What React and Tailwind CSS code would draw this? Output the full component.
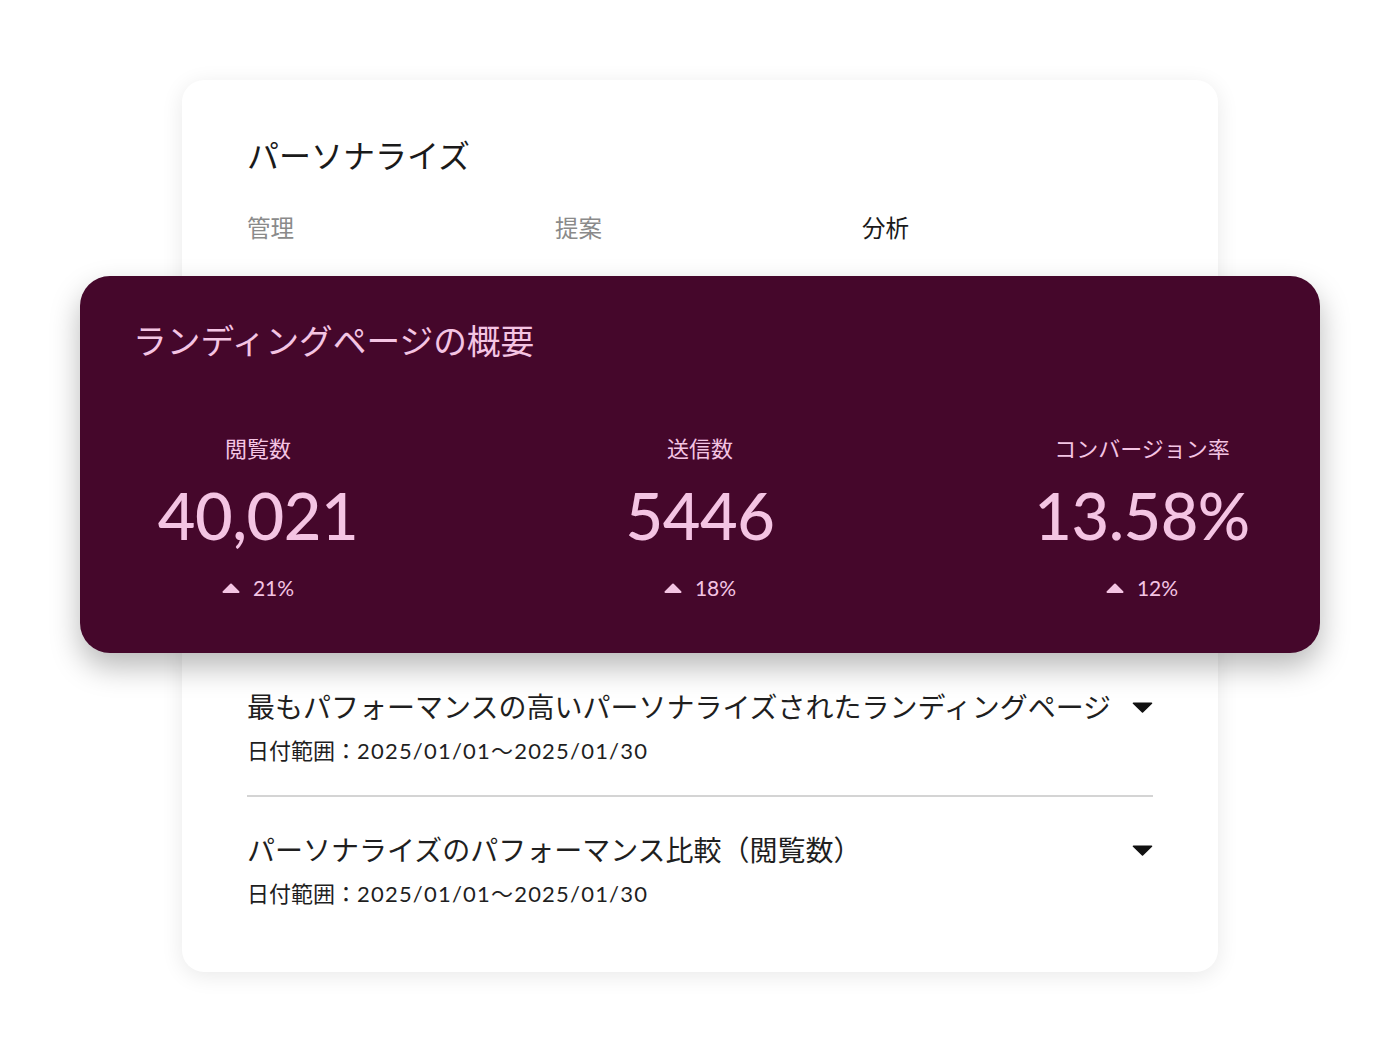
import React from 'react';

const FONT = "font-['Lato','Noto_Sans_CJK_JP',sans-serif]";

const stats = [
  { label: '閲覧数', value: '40,021', delta: '21%' },
  { label: '送信数', value: '5446', delta: '18%' },
  { label: 'コンバージョン率', value: '13.58%', delta: '12%' },
];

const reports = [
  { title: '最もパフォーマンスの高いパーソナライズされたランディングページ', from: '2025/01/01', to: '2025/01/30' },
  { title: 'パーソナライズのパフォーマンス比較（閲覧数）', from: '2025/01/01', to: '2025/01/30' },
];

const TriangleUp = () => (
  <svg width="18" height="10" viewBox="0 0 18 10" className="shrink-0">
    <path d="M9 1.5 L16.5 9 H1.5 Z" fill="#f4c4e3" stroke="#f4c4e3" strokeWidth="2" strokeLinejoin="round" />
  </svg>
);

const TriangleDown = () => (
  <svg width="21" height="11" viewBox="0 0 21 11" className="shrink-0">
    <path d="M1.5 1.2 H19.5 L10.5 10 Z" fill="#111" stroke="#111" strokeWidth="1.6" strokeLinejoin="round" />
  </svg>
);

const StatBlock = ({ label, value, delta }) => (
  <div className="w-[260px] flex flex-col items-center">
    <div className="text-[22px] leading-none text-[#f4c4e3]">{label}</div>
    <div className="mt-[23px] text-[65px] leading-none font-medium text-[#f4c4e3] tracking-[-0.5px]">{value}</div>
    <div className="mt-[29px] flex items-center gap-[13px] text-[21px] leading-none text-[#f4c4e3]">
      <TriangleUp />
      <span>{delta}</span>
    </div>
  </div>
);

const App = () => {
  return (
    <div className={`min-h-[1050px] w-full bg-white pt-[80px] ${FONT}`}>
      <div className="mx-auto w-[1036px] rounded-[22px] bg-white shadow-[0_4px_22px_rgba(0,0,0,0.09)] pt-[60px] pb-[67px]">
        {/* header */}
        <div className="px-[65px]">
          <h1 className="text-[32px] leading-none text-[#1a1a1a]">パーソナライズ</h1>
          <div className="mt-[45px] flex text-[23.5px] leading-none">
            <span className="w-[308px] text-[#8a8a8a]">管理</span>
            <span className="w-[307px] text-[#8a8a8a]">提案</span>
            <span className="text-[#1a1a1a]">分析</span>
          </div>
        </div>

        {/* overview panel */}
        <div className="relative -mx-[102px] mt-[35px] rounded-[30px] bg-[#45072b] pt-[49px] pb-[55px] shadow-[0_14px_30px_rgba(0,0,0,0.28)]">
          <h2 className="pl-[53px] text-[33.7px] leading-none text-[#f4c4e3]">ランディングページの概要</h2>
          <div className="mt-[80px] flex justify-between px-[48px]">
            {stats.map((s) => (
              <StatBlock key={s.label} {...s} />
            ))}
          </div>
        </div>

        {/* reports */}
        <div className="px-[65px]">
          {reports.map((r, i) => (
            <div key={r.title}>
              {i > 0 && <div className="h-[2px] bg-[#d4d4d4]" />}
              <div className={i === 0 ? 'pt-[40px] pb-[33px]' : 'pt-[39px]'}>
                <div className="flex items-center justify-between">
                  <span className="text-[28px] leading-none text-[#1f1f1f]">{r.title}</span>
                  <TriangleDown />
                </div>
                <div className="mt-[19px] text-[22px] leading-none text-[#1f1f1f]">
                  日付範囲：<span className="tracking-[1.2px]">{r.from}〜{r.to}</span>
                </div>
              </div>
            </div>
          ))}
        </div>
      </div>
    </div>
  );
};

export default App;
